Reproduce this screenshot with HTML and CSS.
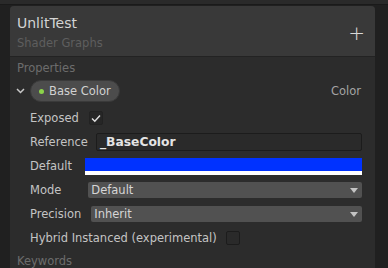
FILE: index.html
```html
<!DOCTYPE html>
<html lang="en">
<head>
  <meta charset="UTF-8">
  <title>Blackboard</title>
  <link rel="stylesheet" href="styles.css">
</head>
<body>
<div class="topbar"></div>
<div class="board">
  <div class="header">
    <div class="titles">
      <div class="title">UnlitTest</div>
      <div class="subtitle">Shader Graphs</div>
    </div>
    <div class="add">+</div>
  </div>
  <div class="section">Properties</div>
  <div class="prop">
    <span class="chevron">
      <svg width="9" height="6" viewBox="0 0 9 6"><path d="M1 1 L4.5 4.5 L8 1" fill="none" stroke="#c8c8c8" stroke-width="1.5"/></svg>
    </span>
    <span class="pill"><span class="dot"></span>Base Color</span>
    <span class="type">Color</span>
  </div>
  <div class="rows">
    <div class="row">
      <span class="label">Exposed</span>
      <span class="check">
        <svg width="10" height="9" viewBox="0 0 10 9"><path d="M1 4.5 L3.8 7.3 L9 1.5" fill="none" stroke="#e0e0e0" stroke-width="1.4"/></svg>
      </span>
    </div>
    <div class="row">
      <span class="label">Reference</span>
      <span class="field">_BaseColor</span>
    </div>
    <div class="row">
      <span class="label">Default</span>
      <span class="swatch"></span>
    </div>
    <div class="row">
      <span class="label mode">Mode</span>
      <span class="select">Default<span class="arrow"></span></span>
    </div>
    <div class="row">
      <span class="label">Precision</span>
      <span class="select">Inherit<span class="arrow"></span></span>
    </div>
    <div class="row">
      <span class="label">Hybrid Instanced (experimental)</span>
      <span class="check off"></span>
    </div>
  </div>
  <div class="section">Keywords</div>
</div>
</body>
</html>
```

FILE: styles.css
```css
body {
  margin: 0;
  width: 388px;
  height: 268px;
  overflow: hidden;
  background: #202020;
  font-family: "DejaVu Sans", sans-serif;
  font-size: 11.5px;
  color: #c4c4c4;
}
.topbar {
  height: 4px;
  background: #2a2a2a;
  border-bottom: 1px solid #1a1a1a;
}
.board {
  margin: 1px 13px 0 10px;
  height: 270px;
  background: #2c2c2c;
  border-radius: 4px 4px 0 0;
}
.header {
  height: 50px;
  background: #393939;
  border-bottom: 1px solid #232323;
  border-radius: 4px 4px 0 0;
  display: flex;
  align-items: center;
  justify-content: space-between;
  padding: 0 10px 0 7px;
}
.title {
  font-size: 14px;
  color: #d4d4d4;
  margin-top: 2px;
}
.subtitle {
  color: #5e5e5e;
  margin-top: 5px;
}
.add {
  font-size: 20px;
  font-weight: 300;
  color: #d8d8d8;
  margin-top: 4px;
}
.section {
  color: #6c6c6c;
  padding: 4px 7px 2px;
  height: 17px;
}
.prop {
  display: flex;
  align-items: center;
  height: 22px;
  padding: 0 14px 2px 6px;
}
.chevron {
  width: 14px;
  display: flex;
  align-items: center;
}
.pill {
  display: flex;
  align-items: center;
  height: 20px;
  padding: 0 8px 0 8px;
  background: #4c4c4c;
  border: 1px solid #3a3a3a;
  border-radius: 11px;
  color: #d2d2d2;
}
.dot {
  width: 5px;
  height: 5px;
  border-radius: 50%;
  background: #8bd34a;
  margin-right: 5px;
}
.type {
  margin-left: auto;
  color: #a4a4a4;
}
.rows {
  padding: 2px 13px 0 20px;
}
.row {
  display: flex;
  align-items: center;
  height: 24px;
}
.label {
  margin-right: 10px;
  white-space: nowrap;
}
.label.mode {
  margin-right: 27px;
}
.check {
  width: 12px;
  height: 12px;
  display: flex;
  align-items: center;
  justify-content: center;
  background: #262626;
  border: 1px solid #222;
  border-radius: 2px;
}
.check.off {
  background: #2a2a2a;
  border-color: #1c1c1c;
  margin-left: -1px;
}
.field {
  flex: 1;
  height: 16px;
  margin-left: -2px;
  padding: 0 3px;
  background: #2a2a2a;
  border: 1px solid #1c1c1c;
  border-radius: 2px;
  font-size: 12.3px;
  font-weight: bold;
  color: #e4e4e4;
  display: flex;
  align-items: center;
}
.swatch {
  flex: 1;
  height: 13px;
  background: #0032ff;
  border-bottom: 4px solid #fff;
  margin-left: 3px;
}
.select {
  flex: 1;
  height: 16px;
  padding: 0 3px;
  background: #515151;
  border-radius: 2px;
  color: #d6d6d6;
  display: flex;
  align-items: center;
}
.arrow {
  margin-left: auto;
  margin-right: 1px;
  width: 0;
  height: 0;
  border-left: 4px solid transparent;
  border-right: 4px solid transparent;
  border-top: 5px solid #c4c4c4;
}
```
